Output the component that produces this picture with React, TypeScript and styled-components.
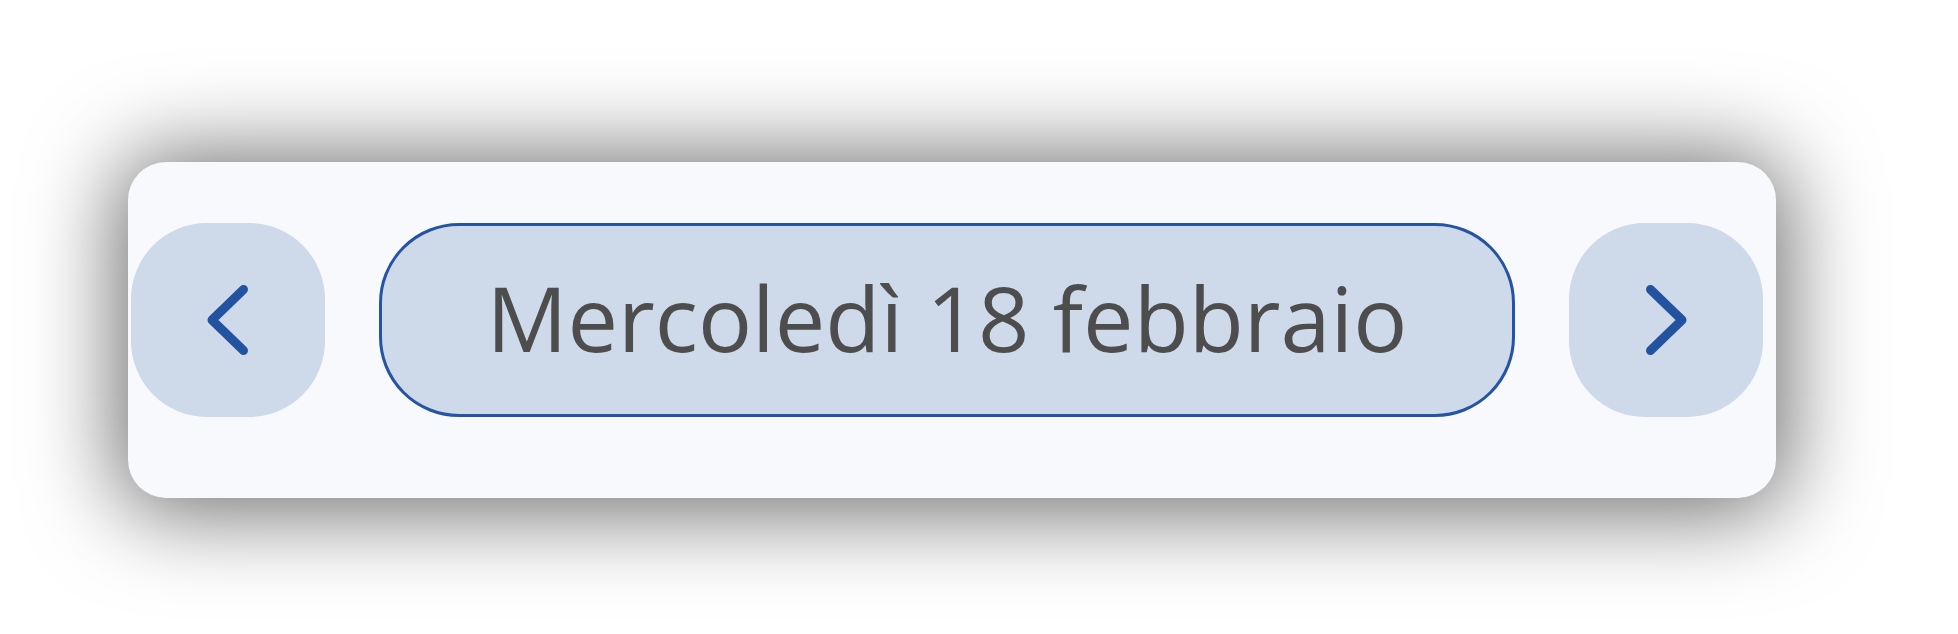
import React from "react";
import styled, { createGlobalStyle } from "styled-components";

const GlobalStyle = createGlobalStyle`
  html, body {
    margin: 0;
    padding: 0;
    background: #ffffff;
  }
  body {
    font-family: "Open Sans", "Noto Sans", sans-serif;
  }
`;

const Page = styled.div`
  width: 1958px;
  height: 634px;
  box-sizing: border-box;
  padding: 162px 0 0 128px;
  background: #ffffff;
  overflow: hidden;
`;

const Card = styled.div`
  width: 1648px;
  height: 336px;
  box-sizing: border-box;
  padding: 61px 13px 81px 3px;
  background: #f7f9fd;
  border-radius: 38px;
  box-shadow: 0 4px 90px 10px rgba(0, 0, 0, 0.58);
  display: flex;
  align-items: center;
  gap: 54px;
`;

const NavButton = styled.button`
  flex: 0 0 194px;
  width: 194px;
  height: 194px;
  border: none;
  padding: 0;
  margin: 0;
  border-radius: 76px;
  background: #ced9ea;
  display: flex;
  align-items: center;
  justify-content: center;
  cursor: pointer;
`;

const DatePill = styled.div`
  flex: 1 1 auto;
  height: 194px;
  box-sizing: border-box;
  border: 3px solid #2454a3;
  border-radius: 80px;
  background: #ced9ea;
  display: flex;
  align-items: center;
  justify-content: center;
  padding-bottom: 6px;
`;

const DateText = styled.span`
  font-family: "Open Sans", "Noto Sans", sans-serif;
  font-weight: 400;
  font-size: 90px;
  line-height: 1;
  color: #4d4d4d;
  white-space: nowrap;
`;

const Chevron = ({ dir }: { dir: "left" | "right" }) => (
  <svg width="42" height="72" viewBox="0 0 42 72" fill="none">
    <path
      d={dir === "left" ? "M36.5 5.5 L5 36 L36.5 66.5" : "M5.5 5.5 L37 36 L5.5 66.5"}
      stroke="#2252a0"
      strokeWidth="9"
      strokeLinecap="round"
      strokeLinejoin="round"
    />
  </svg>
);

export default function App() {
  return (
    <>
      <GlobalStyle />
      <Page>
        <Card>
          <NavButton aria-label="Giorno precedente">
            <Chevron dir="left" />
          </NavButton>
          <DatePill>
            <DateText>Mercoledì 18 febbraio</DateText>
          </DatePill>
          <NavButton aria-label="Giorno successivo">
            <Chevron dir="right" />
          </NavButton>
        </Card>
      </Page>
    </>
  );
}
